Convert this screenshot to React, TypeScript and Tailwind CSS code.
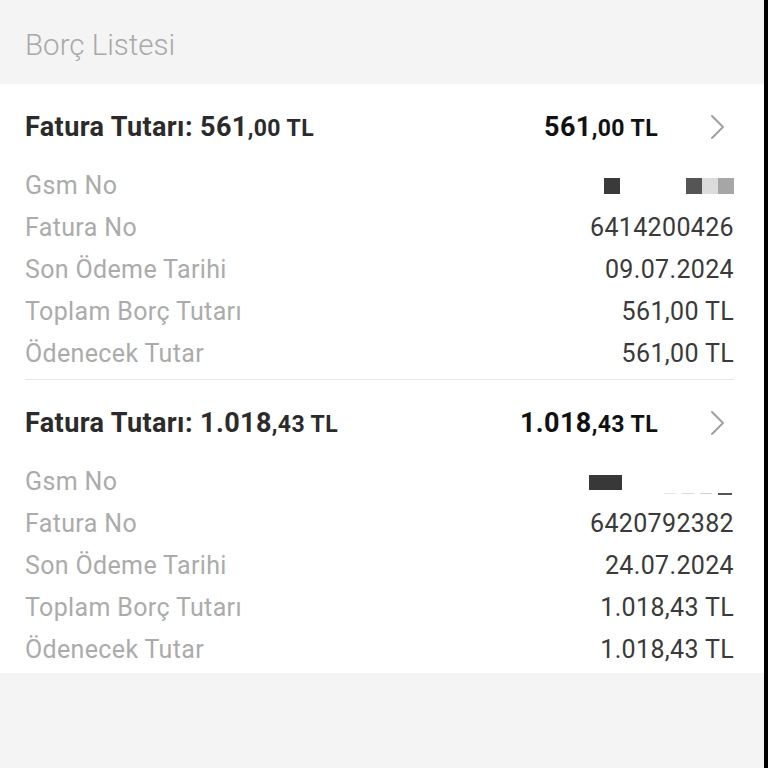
import * as React from 'react';

type Bill = {
  whole: string;
  cents: string;
  faturaNo: string;
  sonOdeme: string;
  total: string;
  mask: 'a' | 'b';
};

const bills: Bill[] = [
  { whole: '561', cents: ',00', faturaNo: '6414200426', sonOdeme: '09.07.2024', total: '561,00 TL', mask: 'a' },
  { whole: '1.018', cents: ',43', faturaNo: '6420792382', sonOdeme: '24.07.2024', total: '1.018,43 TL', mask: 'b' },
];

function Chevron() {
  return (
    <svg width="16" height="26" viewBox="0 0 16 26" fill="none" aria-hidden="true">
      <path d="M2 2 L13 13 L2 24" stroke="#a0a0a0" strokeWidth="2" strokeLinecap="round" strokeLinejoin="round" />
    </svg>
  );
}

function Amount({ whole, cents, tone }: { whole: string; cents: string; tone: string }) {
  return (
    <span className={`font-bold ${tone}`}>
      <span className="text-[27px]">{whole}</span>
      <span className="text-[23px]">{cents} TL</span>
    </span>
  );
}

function GsmMask({ kind }: { kind: 'a' | 'b' }) {
  if (kind === 'a') {
    return (
      <div className="flex items-center">
        <div className="h-[16px] w-[16px] bg-[#3a3a3a]" />
        <div className="w-[66px]" />
        <div className="h-[16px] w-[16px] bg-[#555]" />
        <div className="h-[16px] w-[16px] bg-[#dcdcdc]" />
        <div className="h-[16px] w-[16px] bg-[#a6a6a6]" />
      </div>
    );
  }
  return (
    <div className="flex items-end">
      <div className="h-[15px] w-[33px] bg-[#383838]" />
      <div className="ml-[42px] mb-[-6px] flex h-[4px] w-[70px] items-center gap-[6px]">
        <div className="h-[1px] w-[12px] bg-[#e6e6e6]" />
        <div className="h-[1px] w-[12px] bg-[#dcdcdc]" />
        <div className="h-[1px] w-[12px] bg-[#cfcfcf]" />
        <div className="h-[2px] w-[14px] bg-[#555]" />
      </div>
    </div>
  );
}

function Row({ label, children }: { label: string; children: React.ReactNode }) {
  return (
    <div className="flex h-[42px] items-center justify-between pt-[2px] text-[25px] tracking-[0.35px]">
      <span className="text-[#ababab]">{label}</span>
      <span className="text-[#3a3a3a]">{children}</span>
    </div>
  );
}

function BillBlock({ bill, last }: { bill: Bill; last: boolean }) {
  return (
    <div className={last ? 'pb-[3px]' : 'border-b border-[#e6e6e6] pb-[5px]'}>
      <div className="flex h-[80px] items-center pt-[6px] tracking-[0.4px]">
        <div className="flex-1">
          <span className="text-[27px] font-bold text-[#2b2b2b]">Fatura Tutarı: </span>
          <Amount whole={bill.whole} cents={bill.cents} tone="text-[#2b2b2b]" />
        </div>
        <Amount whole={bill.whole} cents={bill.cents} tone="text-[#111]" />
        <div className="ml-[52px] mr-[8px] flex items-center">
          <Chevron />
        </div>
      </div>
      <Row label="Gsm No">
        <GsmMask kind={bill.mask} />
      </Row>
      <Row label="Fatura No">{bill.faturaNo}</Row>
      <Row label="Son Ödeme Tarihi">{bill.sonOdeme}</Row>
      <Row label="Toplam Borç Tutarı">{bill.total}</Row>
      <Row label="Ödenecek Tutar">{bill.total}</Row>
    </div>
  );
}

export default function App() {
  return (
    <div className="flex h-[768px] w-[768px] overflow-hidden" style={{ fontFamily: 'Roboto, "Noto Sans", sans-serif' }}>
      <div className="flex flex-1 flex-col bg-[#f4f4f4]">
        <div className="flex h-[84px] items-center pl-[25px] pt-[6px]">
          <span className="text-[29.5px] font-light text-[#a9a9a9]">Borç Listesi</span>
        </div>
        <div className="bg-white pl-[25px] pr-[30px]">
          {bills.map((b, i) => (
            <BillBlock key={b.faturaNo} bill={b} last={i === bills.length - 1} />
          ))}
        </div>
      </div>
      <div className="w-[4px] bg-black" />
    </div>
  );
}
